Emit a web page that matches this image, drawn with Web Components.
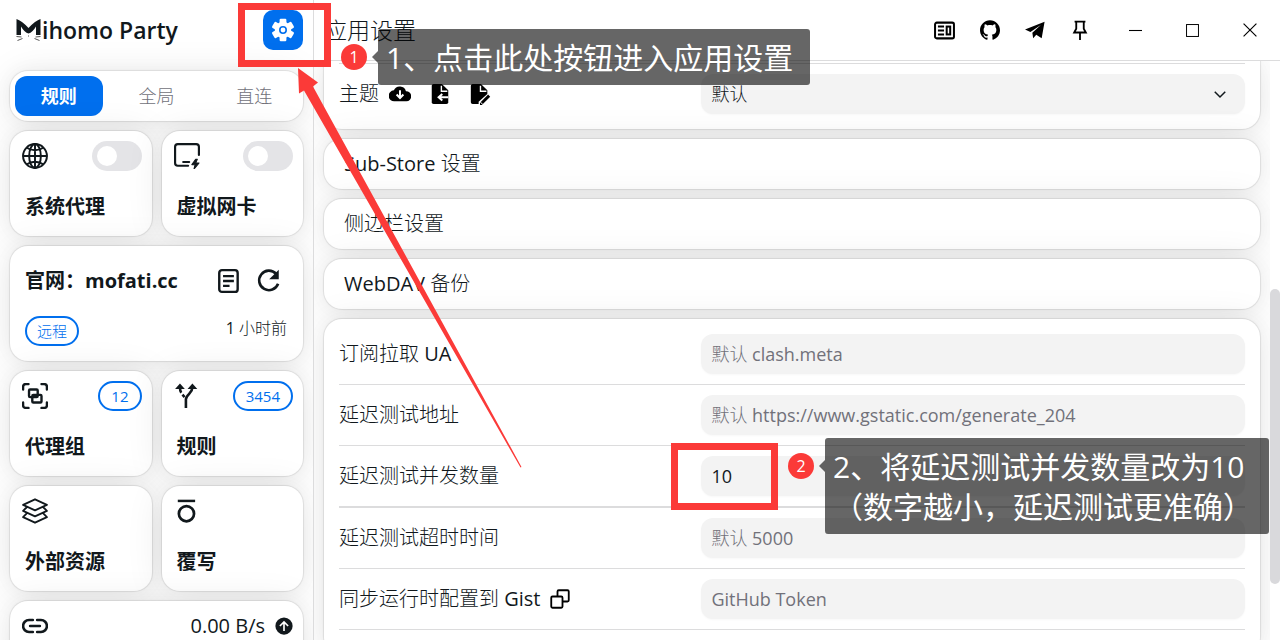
<!DOCTYPE html>
<html lang="zh-CN">
<head>
<meta charset="UTF-8">
<meta name="viewport" content="width=device-width, initial-scale=1">
<title>Mihomo Party</title>
<style>
  :root {
    --fg: #11181c;
    --muted: #71717a;
    --primary: #006fee;
    --field: #f3f3f3;
    --line: #dcdcdd;
    --mark: #fb3a38;
    --bold-font: "Open Sans", "Noto Sans CJK SC", sans-serif;
    --shadow: 0 0 19px rgba(0,0,0,.04), 0 3px 38px rgba(0,0,0,.09), 0 0 1px 1px rgba(0,0,0,.09);
  }
  body {
    margin: 0;
    color: var(--fg);
    background: #fff;
    font: 20px/30px "Open Sans", "Noto Sans CJK SC Light", "Noto Sans CJK SC DemiLight", "Noto Sans CJK SC", sans-serif;
  }
</style>
</head>
<body>
<app-shell>
  <side-bar slot="side"></side-bar>
  <settings-page></settings-page>
  <guide-layer slot="guide"></guide-layer>
</app-shell>

<script>
// ===== 图标 =====
const ICONS = {
  gear: `<g fill="currentColor"><circle cx="12" cy="12" r="8.2"/><rect x="8.6" y=".8" width="6.8" height="22.4" rx="1.2"/><rect x="8.6" y=".8" width="6.8" height="22.4" rx="1.2" transform="rotate(60 12 12)"/><rect x="8.6" y=".8" width="6.8" height="22.4" rx="1.2" transform="rotate(120 12 12)"/></g><circle cx="12" cy="12" r="3.2" fill="none" stroke="#006fee" stroke-width="1.6"/>`,
  globe: `<g fill="none" stroke="currentColor" stroke-width="1.8"><circle cx="12" cy="12" r="11"/><ellipse cx="12" cy="12" rx="5.4" ry="11"/><path d="M12 .6v22.8M.6 12h22.8M4.2 4.2c4.4 3.4 11.2 3.4 15.6 0M4.2 19.8c4.4-3.4 11.2-3.4 15.6 0"/></g>`,
  tun: `<path d="M23 11V3.5Q23 1 20.500 1H3.500Q1 1 1 3.500v15Q1 21 3.500 21H13M8.500 17.500h5.500" fill="none" stroke="currentColor" stroke-width="2" stroke-linecap="round"/><path d="M20 15l-3.500 5h3l-1 4 4.500-5.500h-3l1.500-3.500z" fill="currentColor" stroke="currentColor" stroke-width="1" stroke-linejoin="round"/>`,
  doc: `<g fill="none" stroke="currentColor" stroke-width="2.200"><rect x="3" y="2" width="17" height="20" rx="2.500"/><path d="M6.500 7.500h10M6.500 12h10M6.500 16.500h6"/></g>`,
  refresh: `<path d="M18.500 5.300A9 9 0 1 0 20.400 14.500" fill="none" stroke="currentColor" stroke-width="2.400"/><path d="M21 1.500v8.800h-8.800z" fill="currentColor"/>`,
  group: `<g fill="none" stroke="currentColor" stroke-width="2.200" stroke-linecap="round" stroke-linejoin="round"><path d="M1 6V3.500Q1 1 3.500 1H6M18 1h2.500Q23 1 23 3.500V6M23 18v2.500q0 2.500-2.500 2.500H18M6 23H3.500Q1 23 1 20.500V18"/><rect x="6.500" y="6" width="8" height="7" rx="1"/><rect x="9.500" y="11" width="8.500" height="7" rx="1"/></g>`,
  fork: `<path d="M11 23v-8c0-2 1-3 3-5 1.500-1.500 3-3 3-6" fill="none" stroke="currentColor" stroke-width="2.400"/><path d="M5.500 4q0 3.500 1.200 5M7.800 10.800l2 2.200" fill="none" stroke="currentColor" stroke-width="2.400"/><path d="M1 5.500L5.500.5 10 5.500zM12.500 5.500L17 .5 21.500 5.500z" fill="currentColor"/>`,
  layers: `<g fill="none" stroke="currentColor" stroke-width="1.700" stroke-linejoin="round"><path d="M12 1.200L23 6.300 12 11.400 1 6.300zM4.600 8.300L1 11.900l11 5.100 11-5.100-3.600-3.600M4.600 14L1 17.700l11 5.100 11-5.100L19.400 14"/></g>`,
  override: `<circle cx="11.500" cy="14.500" r="7" fill="none" stroke="currentColor" stroke-width="2.500"/><path d="M3.500 2.700h16" stroke="currentColor" stroke-width="2.300"/>`,
  link: `<path d="M10 6.500H6.500a5.500 5.500 0 0 0 0 11H10M14 6.500h3.500a5.500 5.500 0 0 1 0 11H14M7.500 12h9" fill="none" stroke="currentColor" stroke-width="2.400" stroke-linecap="round"/>`,
  up: `<circle cx="12" cy="12" r="11.500" fill="currentColor"/><path d="M12 18.500V6.500M6.500 12L12 6.500l5.500 5.500" fill="none" stroke="#fff" stroke-width="2.200"/>`,
  news: `<g fill="none" stroke="currentColor" stroke-width="2.300"><rect x="1.200" y="3" width="21.600" height="18" rx="2"/><rect x="14.500" y="7.500" width="4" height="9"/><path d="M4.500 7.500h7M4.500 12h7M4.500 16.500h7"/></g>`,
  github: `<path fill="currentColor" d="M12 .297c-6.630 0-12 5.373-12 12 0 5.303 3.438 9.800 8.205 11.385.600.113.820-.258.820-.577 0-.285-.010-1.040-.015-2.040-3.338.724-4.042-1.610-4.042-1.610C4.422 18.070 3.633 17.700 3.633 17.700c-1.087-.744.084-.729.084-.729 1.205.084 1.838 1.236 1.838 1.236 1.070 1.835 2.809 1.305 3.495.998.108-.776.417-1.305.760-1.605-2.665-.300-5.466-1.332-5.466-5.930 0-1.310.465-2.380 1.235-3.220-.135-.303-.540-1.523.105-3.176 0 0 1.005-.322 3.300 1.230.960-.267 1.980-.399 3-.405 1.020.006 2.040.138 3 .405 2.280-1.552 3.285-1.230 3.285-1.230.645 1.653.240 2.873.120 3.176.765.840 1.230 1.910 1.230 3.220 0 4.610-2.805 5.625-5.475 5.920.420.360.810 1.096.810 2.220 0 1.606-.015 2.896-.015 3.286 0 .315.210.690.825.570C20.565 22.092 24 17.592 24 12.297c0-6.627-5.373-12-12-12"/>`,
  plane: `<path fill="currentColor" d="M0 11.500L23.500 2 20 22l-6.500-4.200L9.800 22l-1-6.700L19 6 6.500 14.300z"/>`,
  pin: `<path d="M5.500 2h13M7.500 2v8.500L5 15h14l-2.500-4.500V2M12 15v9" fill="none" stroke="currentColor" stroke-width="2.200"/>`,
  cloud: `<path fill="currentColor" d="M18.500 9A7 7 0 0 0 5.300 8 6 6 0 0 0 6 20h13a5.500 5.500 0 0 0-.500-11z"/><path d="M12 8v8M8.300 12.500L12 16.300l3.700-3.800" fill="none" stroke="#fff" stroke-width="2.200"/>`,
  fileIn: `<path fill="currentColor" d="M3 3q0-2 2-2h9l7 7v13q0 2-2 2H5q-2 0-2-2z"/><path d="M13.500 3v6H20" fill="none" stroke="#fff" stroke-width="1.500"/><path d="M21 15.500h-9M14.500 12l-4 3.500 4 3.500" fill="none" stroke="#fff" stroke-width="2.200"/>`,
  fileEdit: `<path fill="currentColor" d="M2 3q0-2 2-2h9l7 7v4L10.500 20.500V23H4q-2 0-2-2z"/><path d="M12.500 3v6H19" fill="none" stroke="#fff" stroke-width="1.500"/><path d="M14 21.800l8-8" stroke="currentColor" stroke-width="3.200"/><path d="M12 24v-3l3 3z" fill="currentColor"/>`,
  copy: `<g fill="none" stroke="currentColor" stroke-width="2.200" stroke-linejoin="round"><rect x="1.500" y="9" width="13.500" height="13.500" rx="1.500"/><path d="M9 9V3q0-1.500 1.500-1.500H21q1.500 0 1.500 1.500v10.500Q22.500 15 21 15h-6"/></g>`,
  chevron: `<path d="M5 9l7 7 7-7" fill="none" stroke="currentColor" stroke-width="2"/>`,
  min: `<path d="M0 12h24" stroke="currentColor" stroke-width="2"/>`,
  max: `<rect x="1" y="1" width="22" height="22" fill="none" stroke="currentColor" stroke-width="1.800"/>`,
  close: `<path d="M1 1l22 22M23 1L1 23" stroke="currentColor" stroke-width="2"/>`
};

class UiIcon extends HTMLElement {
  constructor() {
    super();
    this.attachShadow({ mode: 'open' });
  }
  connectedCallback() {
    const size = this.getAttribute('size') || 24;
    this.shadowRoot.innerHTML = `
      <style>
        :host { display: inline-flex; flex: none; }
        svg { display: block; }
      </style>
      <svg width="${size}" height="${size}" viewBox="0 0 24 24" aria-hidden="true">${ICONS[this.getAttribute('name')]}</svg>
    `;
  }
}
customElements.define('ui-icon', UiIcon);

// ===== <ui-card> — 圆角卡片 =====
class UiCard extends HTMLElement {
  constructor() {
    super();
    this.attachShadow({ mode: 'open' }).innerHTML = `
      <style>
        :host {
          display: block;
          box-sizing: border-box;
          background: #fff;
          border-radius: 18px;
          box-shadow: var(--shadow);
        }
      </style>
      <slot></slot>
    `;
  }
}
customElements.define('ui-card', UiCard);

// ===== <side-tile> — 侧边栏小卡片，switch 或 count =====
class SideTile extends HTMLElement {
  constructor() {
    super();
    this.attachShadow({ mode: 'open' });
  }
  connectedCallback() {
    const label = this.getAttribute('label');
    const count = this.getAttribute('count');
    let extra = '';
    if (count) extra = `<span class="chip">${count}</span>`;
    if (this.hasAttribute('switch')) extra = `<input type="checkbox" role="switch" id="sw">`;
    const title = this.hasAttribute('switch')
      ? `<label class="title" for="sw">${label}</label>`
      : `<span class="title">${label}</span>`;
    this.shadowRoot.innerHTML = `
      <style>
        :host { display: block; min-width: 0; }
        ui-card { height: 105px; padding: 10px 10px 14px 12px; display: flex; flex-direction: column; justify-content: space-between; }
        .top { display: flex; justify-content: space-between; align-items: center; height: 30px; }
        .title { font-family: var(--bold-font); font-weight: 700; padding-left: 3px; }
        .chip {
          box-sizing: border-box;
          height: 30px;
          padding: 0 11px;
          border: 2px solid var(--primary);
          border-radius: 15px;
          color: var(--primary);
          font-size: 15px;
          line-height: 26px;
        }
        input {
          appearance: none;
          margin: 0;
          width: 50px;
          height: 30px;
          padding: 5px;
          box-sizing: border-box;
          border-radius: 15px;
          background: #e4e4e7;
        }
        input::before {
          content: "";
          display: block;
          width: 20px;
          height: 20px;
          border-radius: 50%;
          background: #fff;
        }
        input:checked { background: var(--primary); }
        input:checked::before { margin-left: auto; }
      </style>
      <ui-card>
        <div class="top"><ui-icon name="${this.getAttribute('icon')}" size="26"></ui-icon>${extra}</div>
        ${title}
      </ui-card>
    `;
  }
}
customElements.define('side-tile', SideTile);

// ===== <side-bar> =====
class SideBar extends HTMLElement {
  constructor() {
    super();
    this.attachShadow({ mode: 'open' });
  }
  connectedCallback() {
    this.shadowRoot.innerHTML = `
      <style>
        :host { display: block; height: 100%; overflow: hidden; }
        button { font: inherit; border: 0; background: none; padding: 0; color: inherit; cursor: pointer; }
        header { display: flex; align-items: center; justify-content: space-between; height: 60px; padding: 0 10px 0 15px; }
        h1 { display: flex; align-items: center; margin: 0; font-size: 23px; font-weight: 600; }
        .gear { display: grid; place-items: center; width: 40px; height: 40px; border-radius: 10px; background: var(--primary); color: #fff; }
        .body { display: grid; grid-template-columns: 1fr 1fr; gap: 10px; padding: 11px 10px; }
        .wide { grid-column: 1 / -1; }
        .tabs { display: grid; grid-template-columns: repeat(3, 1fr); gap: 10px; padding: 5px; }
        .tabs button { height: 40px; border-radius: 12px; font-size: 18px; color: var(--muted); }
        .tabs .on { background: var(--primary); color: #fff; font-family: var(--bold-font); font-weight: 700; }
        .profile { display: flex; flex-direction: column; gap: 20px; padding: 20px 16px 15px 15px; }
        .line { display: flex; justify-content: space-between; }
        .name { font-family: var(--bold-font); font-weight: 700; }
        .tools { display: flex; align-items: center; gap: 14px; padding-right: 5px; }
        .tools button { display: flex; }
        .chip {
          box-sizing: border-box; height: 30px; padding: 0 10px;
          border: 2px solid var(--primary); border-radius: 15px;
          color: var(--primary); font-size: 15px; line-height: 26px;
        }
        .time { font-size: 16px; line-height: 24px; }
        .net { display: flex; align-items: center; justify-content: space-between; padding: 10px 10px 60px 12px; }
        .rate { display: flex; align-items: center; gap: 10px; }
      </style>
      <header>
        <h1 aria-label="Mihomo Party">
          <svg width="27" height="26" viewBox="0 0 26 26" aria-hidden="true">
            <path d="M1 2q5 1.500 12 9 7-7.500 12-9v16h-4.500V9.500Q17 15.500 13 16.500 9 15.500 5.500 9.500V18H1z" fill="#11181c"/>
            <path d="M1 19.500l5 .500M2 23.500l5-2M25 19.500l-5 .500M24 23.500l-5-2M12.500 19h1" stroke="#555" stroke-width="1"/>
          </svg>ihomo Party
        </h1>
        <button class="gear" aria-label="应用设置"><ui-icon name="gear" size="24"></ui-icon></button>
      </header>
      <div class="body">
        <ui-card class="wide tabs">
          <button class="on">规则</button><button>全局</button><button>直连</button>
        </ui-card>
        <side-tile icon="globe" label="系统代理" switch></side-tile>
        <side-tile icon="tun" label="虚拟网卡" switch></side-tile>
        <ui-card class="wide profile">
          <div class="line">
            <span class="name">官网：mofati.cc</span>
            <span class="tools">
              <button aria-label="编辑"><ui-icon name="doc" size="26"></ui-icon></button>
              <button aria-label="更新"><ui-icon name="refresh" size="26"></ui-icon></button>
            </span>
          </div>
          <div class="line"><span class="chip">远程</span><span class="time">1 小时前</span></div>
        </ui-card>
        <side-tile icon="group" label="代理组" count="12"></side-tile>
        <side-tile icon="fork" label="规则" count="3454"></side-tile>
        <side-tile icon="layers" label="外部资源"></side-tile>
        <side-tile icon="override" label="覆写"></side-tile>
        <ui-card class="wide net">
          <ui-icon name="link" size="26"></ui-icon>
          <span class="rate">0.00 B/s <ui-icon name="up" size="18"></ui-icon></span>
        </ui-card>
      </div>
    `;
    const tabs = this.shadowRoot.querySelectorAll('.tabs button');
    tabs.forEach(tab => {
      tab.onclick = () => tabs.forEach(t => t.classList.toggle('on', t === tab));
    });
  }
}
customElements.define('side-bar', SideBar);

// ===== <setting-row> — 标签 + 输入框 / 下拉框 =====
class SettingRow extends HTMLElement {
  constructor() {
    super();
    this.attachShadow({ mode: 'open' });
  }
  connectedCallback() {
    const value = this.getAttribute('value') || '';
    const hint = this.getAttribute('placeholder') || '';
    const field = this.hasAttribute('select')
      ? `<select id="f"><option>${value}</option></select><ui-icon name="chevron" size="18"></ui-icon>`
      : `<input id="f" type="text" value="${value}" placeholder="${hint}">`;
    this.shadowRoot.innerHTML = `
      <style>
        :host { display: flex; align-items: center; justify-content: space-between; height: 40px; }
        .left { display: flex; align-items: center; gap: 10px; }
        .field { width: 60%; display: grid; align-items: center; }
        .field > * { grid-area: 1 / 1; }
        input, select {
          appearance: none;
          box-sizing: border-box;
          width: 100%;
          height: 40px;
          padding: 0 10px;
          border: 0;
          border-radius: 12px;
          background: var(--field);
          box-shadow: 0 1px 2px rgba(0,0,0,.03);
          color: var(--fg);
          font: inherit;
          font-size: 18px;
        }
        input::placeholder { color: var(--muted); opacity: 1; }
        .field ui-icon { justify-self: end; margin-right: 16px; pointer-events: none; }
      </style>
      <div class="left"><label for="f">${this.getAttribute('label')}</label><slot></slot></div>
      <div class="field">${field}</div>
    `;
  }
}
customElements.define('setting-row', SettingRow);

// ===== <settings-page> =====
class SettingsPage extends HTMLElement {
  constructor() {
    super();
    this.attachShadow({ mode: 'open' });
  }
  connectedCallback() {
    this.shadowRoot.innerHTML = `
      <style>
        :host { display: flex; flex-direction: column; height: 100%; min-width: 0; }
        button { font: inherit; border: 0; background: none; padding: 0; color: inherit; cursor: pointer; }
        header {
          flex: none;
          display: flex;
          align-items: center;
          justify-content: space-between;
          height: 60px;
          padding: 0 2px 0 10px;
          border-bottom: 1px solid var(--line);
        }
        h2 { margin: 0; font-size: 23px; font-weight: 400; }
        .bar, .win { display: flex; align-items: center; }
        .bar button { display: grid; place-items: center; width: 45px; height: 40px; color: #000; }
        .win { padding-left: 5px; }
        .win button { width: 57px; }
        .view { flex: 1; min-height: 0; display: flex; }
        .list { flex: 1; min-width: 0; overflow: hidden; display: flex; flex-direction: column; gap: 10px; padding: 0 10px; }
        ui-card { flex: none; }
        .rows { padding: 15px; }
        .rows hr { margin: 10px 0; border: 0; height: 1px; background: var(--line); }
        .rows hr.thick { height: 2px; }
        .cut { padding-top: 2px; border-radius: 0 0 18px 18px; }
        .cut hr { margin-top: 0; }
        .fold button { display: block; width: 100%; height: 50px; padding: 0 20px; text-align: left; }
        .icons { display: flex; align-items: center; gap: 18px; color: #000; }
        .icons button, .icon { display: flex; color: #000; }
        .track { width: 10px; padding-top: 228px; background: #fff; z-index: 1; }
        .thumb { height: 295px; border-radius: 5px; background: #d9d9dc; }
      </style>
      <header>
        <h2>应用设置</h2>
        <div class="bar">
          <button aria-label="文档"><ui-icon name="news" size="21"></ui-icon></button>
          <button aria-label="GitHub"><ui-icon name="github" size="20"></ui-icon></button>
          <button aria-label="Telegram"><ui-icon name="plane" size="20"></ui-icon></button>
          <button aria-label="置顶"><ui-icon name="pin" size="20"></ui-icon></button>
          <div class="win">
            <button aria-label="最小化"><ui-icon name="min" size="13"></ui-icon></button>
            <button aria-label="最大化"><ui-icon name="max" size="13"></ui-icon></button>
            <button aria-label="关闭"><ui-icon name="close" size="14"></ui-icon></button>
          </div>
        </div>
      </header>
      <div class="view">
        <div class="list">
          <ui-card class="rows cut">
            <hr>
            <setting-row label="主题" value="默认" select>
              <span class="icons">
                <button aria-label="下载主题"><ui-icon name="cloud" size="22"></ui-icon></button>
                <button aria-label="导入主题"><ui-icon name="fileIn" size="22"></ui-icon></button>
                <button aria-label="编辑主题"><ui-icon name="fileEdit" size="22"></ui-icon></button>
              </span>
            </setting-row>
          </ui-card>
          <ui-card class="fold"><button>Sub-Store 设置</button></ui-card>
          <ui-card class="fold"><button>侧边栏设置</button></ui-card>
          <ui-card class="fold"><button>WebDAV 备份</button></ui-card>
          <ui-card class="rows">
            <setting-row label="订阅拉取 UA" placeholder="默认 clash.meta"></setting-row>
            <hr>
            <setting-row label="延迟测试地址" placeholder="默认 https://www.gstatic.com/generate_204"></setting-row>
            <hr>
            <setting-row label="延迟测试并发数量" value="10"></setting-row>
            <hr class="thick">
            <setting-row label="延迟测试超时时间" placeholder="默认 5000"></setting-row>
            <hr>
            <setting-row label="同步运行时配置到 Gist" placeholder="GitHub Token">
              <button class="icon" aria-label="复制"><ui-icon name="copy" size="20"></ui-icon></button>
            </setting-row>
            <hr>
          </ui-card>
        </div>
        <div class="track"><div class="thumb"></div></div>
      </div>
    `;
  }
}
customElements.define('settings-page', SettingsPage);

// ===== <guide-layer> — 教程标注：红框、箭头、序号、提示 =====
class GuideLayer extends HTMLElement {
  constructor() {
    super();
    this.attachShadow({ mode: 'open' }).innerHTML = `
      <style>
        :host { position: absolute; inset: 0; overflow: hidden; pointer-events: none; }
        .box { position: absolute; box-sizing: border-box; border: 7px solid var(--mark); }
        .box.a { left: 238px; top: 3px; width: 93px; height: 64px; }
        .box.b { left: 671px; top: 443px; width: 107px; height: 67px; }
        svg { position: absolute; left: 290px; top: 60px; }
        .num {
          position: absolute; width: 26px; height: 26px; border-radius: 50%;
          background: var(--mark); color: #fff; font-size: 16px; line-height: 26px; text-align: center;
        }
        .num.a { left: 341px; top: 44px; }
        .num.b { left: 788px; top: 453px; }
        .tip {
          position: absolute; box-sizing: border-box; padding: 9px 8px 7px; border-radius: 3px;
          background: rgba(0,0,0,.6); color: #fff; font-family: var(--bold-font); font-size: 30px; line-height: 40px; white-space: nowrap;
        }
        .tip::before {
          content: ""; position: absolute; right: 100%; top: 22px;
          border: 6px solid transparent; border-left: 0; border-right-color: rgba(0,0,0,.6);
        }
        .tip.a { left: 378px; top: 29px; width: 432px; }
        .tip.b { left: 825px; top: 438px; width: 444px; }
      </style>
      <div class="box a"></div>
      <div class="box b"></div>
      <svg width="240" height="415" viewBox="290 60 240 415" aria-hidden="true">
        <path d="M298 68l20 14.500-5 4L521.500 467l-1 .5L304 90.500l-5 3z" fill="#fb3a38"/>
      </svg>
      <span class="num a">1</span>
      <div class="tip a">1、点击此处按钮进入应用设置</div>
      <span class="num b">2</span>
      <div class="tip b">2、将延迟测试并发数量改为10<br>（数字越小，延迟测试更准确）</div>
    `;
  }
}
customElements.define('guide-layer', GuideLayer);

// ===== <app-shell> — 整体布局 =====
class AppShell extends HTMLElement {
  constructor() {
    super();
    this.attachShadow({ mode: 'open' }).innerHTML = `
      <style>
        :host { position: relative; display: flex; height: 100vh; overflow: hidden; }
        aside { flex: none; width: 313px; border-right: 1px solid var(--line); overflow: hidden; }
        main { flex: 1; min-width: 0; }
      </style>
      <aside><slot name="side"></slot></aside>
      <main><slot></slot></main>
      <slot name="guide"></slot>
    `;
  }
}
customElements.define('app-shell', AppShell);
</script>
</body>
</html>
